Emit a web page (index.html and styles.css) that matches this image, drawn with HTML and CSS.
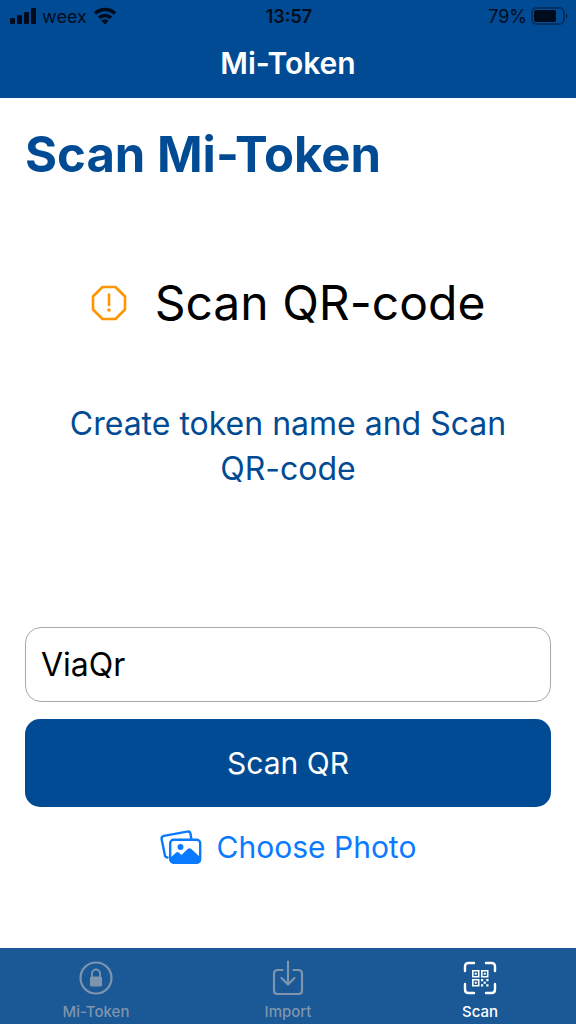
FILE: index.html
```html
<!DOCTYPE html>
<html lang="en">
<head>
    <meta charset="UTF-8">
    <meta name="viewport" content="width=device-width, initial-scale=1.0">
    <title>Mi-Token</title>
    <link rel="stylesheet" href="styles.css">
</head>
<body>
    <header class="header">
        <div class="status-bar">
            <div class="status-left">
                <svg width="26" height="16" viewBox="0 0 26 16" aria-hidden="true">
                    <rect x="0" y="10" width="5" height="6" rx="1"/>
                    <rect x="7" y="7" width="5" height="9" rx="1"/>
                    <rect x="14" y="4" width="5" height="12" rx="1"/>
                    <rect x="21" y="0" width="5" height="16" rx="1"/>
                </svg>
                <span>weex</span>
                <svg width="24" height="18" viewBox="0 0 24 18" aria-hidden="true">
                    <path d="M2 6.5a14.5 14.5 0 0 1 20 0M6 10.800a8.800 8.800 0 0 1 12 0" fill="none" stroke="currentColor" stroke-width="3.400"/>
                    <path d="M12 17.500l-3.600-3.700a5.200 5.200 0 0 1 7.200 0z"/>
                </svg>
            </div>
            <span class="clock">13:57</span>
            <div class="status-right">
                <span>79%</span>
                <svg width="37" height="18" viewBox="0 0 37 18" aria-hidden="true">
                    <rect x="1" y="1" width="32" height="16" rx="4" fill="none" stroke="currentColor" stroke-opacity=".5" stroke-width="1.500"/>
                    <rect x="3" y="3" width="22" height="12" rx="2"/>
                    <path d="M35 6.500c2 1 2 4 0 5z" opacity=".6"/>
                </svg>
            </div>
        </div>
        <div class="nav-title">Mi-Token</div>
    </header>

    <main class="content">
        <h1>Scan Mi-Token</h1>

        <div class="step">
            <svg width="36" height="36" viewBox="0 0 36 36" fill="none" stroke="currentColor" aria-hidden="true">
                <path d="M11.500 2h13L34 11.500v13L24.500 34h-13L2 24.500v-13z" stroke-width="2.600" stroke-linejoin="round"/>
                <path d="M18 9.500v10.500" stroke-width="2.600" stroke-linecap="round"/>
                <circle cx="18" cy="25" r="1.800" fill="currentColor" stroke="none"/>
            </svg>
            <h2>Scan QR-code</h2>
        </div>

        <p class="hint">Create token name and Scan QR-code</p>

        <form class="form">
            <input class="name-input" type="text" value="ViaQr" aria-label="Token name">
            <button class="scan-btn" type="button">Scan QR</button>
            <button class="photo-btn" type="button">
                <svg width="42" height="34" viewBox="0 0 42 34" fill="none" stroke="currentColor" stroke-width="2.400" aria-hidden="true">
                    <path d="M7.500 27.500c-1.500 0-2.300-.8-2.600-2.200L1.700 9.500c-.4-2 .4-3.200 2.200-3.600L27 1.600c1.900-.4 3.100.4 3.500 2.200L31.300 9" stroke-linecap="round"/>
                    <rect x="10.200" y="9.700" width="30" height="23" rx="3.500"/>
                    <circle cx="20.500" cy="17" r="3" fill="currentColor" stroke="none"/>
                    <path d="M10 28l6.200-5.400c.9-.8 1.700-.8 2.600 0l2.600 2.400 6.600-6.200c1-.9 2-.9 3 0l9.500 8.800v3c0 2-1 3-3 3h-24c-2 0-3.500-1-3.500-3z" fill="currentColor" stroke="none"/>
                </svg>
                <span>Choose Photo</span>
            </button>
        </form>
    </main>

    <nav class="tab-bar">
        <a class="tab" href="#token">
            <svg width="36" height="36" viewBox="0 0 36 36" fill="none" stroke="currentColor" aria-hidden="true">
                <circle cx="18" cy="18" r="15.500" stroke-width="2.200"/>
                <rect x="12" y="16.500" width="12" height="10" rx="1.500" fill="currentColor" stroke="none"/>
                <path d="M14 17v-3.500a4 4 0 0 1 8 0V17" stroke-width="1.800"/>
            </svg>
            <span>Mi-Token</span>
        </a>
        <a class="tab" href="#import">
            <svg width="36" height="36" viewBox="0 0 36 36" fill="none" stroke="currentColor" stroke-width="2.200" stroke-linecap="round" stroke-linejoin="round" aria-hidden="true">
                <path d="M12.500 10H7.500c-2.500 0-3.500 1-3.500 3.500v17C4 33 5 34 7.500 34h21c2.500 0 3.500-1 3.500-3.500v-17c0-2.500-1-3.500-3.500-3.500h-5"/>
                <path d="M18 1.500v22.500M11.500 18l6.500 6.500 6.500-6.500"/>
            </svg>
            <span>Import</span>
        </a>
        <a class="tab active" href="#scan">
            <svg width="36" height="36" viewBox="0 0 36 36" fill="none" stroke="currentColor" aria-hidden="true">
                <path d="M3 11V6.500C3 4 4 3 6.500 3H12M24 3h5.500C32 3 33 4 33 6.500V11M33 24v5.500c0 2.500-1 3.500-3.500 3.500H24M12 33H6.500C4 33 3 32 3 29.500V24" stroke-width="2.400" stroke-linecap="round"/>
                <path d="M10.800 10.800h5.900v5.900h-5.900zM19.800 10.800h5.900v5.900h-5.900zM10.800 19.800h5.900v5.900h-5.900z" stroke-width="1.600"/>
                <path d="M12.750 12.750h2v2h-2zM21.750 12.750h2v2h-2zM12.750 21.750h2v2h-2zM19 19h2.200v2.200h-2.200zM24.300 19h2.200v2.200h-2.200zM21.650 21.650h2.200v2.200h-2.200zM19 24.300h2.200v2.200h-2.200zM24.300 24.300h2.200v2.200h-2.200z" fill="currentColor" stroke="none"/>
            </svg>
            <span>Scan</span>
        </a>
    </nav>
</body>
</html>
```

FILE: styles.css
```css
* {
    box-sizing: border-box;
}
body {
    display: flex;
    flex-direction: column;
    min-height: 100vh;
    margin: 0;
    background: #fff;
    color: #000;
    font-family: Inter, "Liberation Sans", sans-serif;
}
h1, h2, p {
    margin: 0;
    font-weight: 400;
}

/* Header */
.header {
    height: 98px;
    background: #004b93;
}
.status-bar {
    display: grid;
    grid-template-columns: 1fr auto 1fr;
    align-items: center;
    height: 32px;
    padding: 0 8px 0 10px;
    color: #020b1c;
    font-size: 18px;
}
.status-bar svg {
    fill: currentColor;
}
.status-left, .status-right {
    display: flex;
    align-items: center;
    gap: 6px;
}
.status-right {
    justify-content: flex-end;
    gap: 4px;
}
.clock {
    font-weight: 600;
}
.nav-title {
    color: #fff;
    font-size: 30px;
    font-weight: 600;
    line-height: 62px;
    text-align: center;
}

/* Content */
.content {
    flex: 1;
    padding: 24px 25px;
}
h1 {
    color: #004b93;
    font-size: 49px;
    font-weight: 700;
    line-height: 66px;
}
.step {
    display: flex;
    align-items: center;
    justify-content: center;
    gap: 28px;
    margin-top: 83px;
    color: #ff9500;
}
h2 {
    color: #000;
    font-size: 48px;
    line-height: 64px;
}
.hint {
    margin-top: 66px;
    padding: 0 40px;
    color: #004b93;
    font-size: 32px;
    line-height: 45px;
    text-align: center;
}

/* Form */
.form {
    display: flex;
    flex-direction: column;
    margin-top: 136px;
}
.name-input, .scan-btn, .photo-btn {
    font-family: inherit;
    font-size: 30px;
}
.name-input {
    width: 100%;
    height: 75px;
    padding: 0 15px;
    border: 1px solid #a8a8a8;
    border-radius: 16px;
    background: #fff;
    color: #000;
    font-size: 32px;
}
.scan-btn {
    height: 88px;
    margin-top: 17px;
    border: 0;
    border-radius: 15px;
    background: #004b93;
    color: #fff;
}
.photo-btn {
    display: flex;
    align-items: center;
    align-self: center;
    gap: 15px;
    height: 44px;
    margin-top: 18px;
    padding: 0;
    border: 0;
    background: none;
    color: #0a7aff;
}

/* Tab bar */
.tab-bar {
    display: flex;
    height: 76px;
    background: #1a5896;
}
.tab {
    display: flex;
    flex: 1;
    flex-direction: column;
    align-items: center;
    gap: 6px;
    padding-top: 12px;
    color: #7f95ae;
    font-size: 15px;
    font-weight: 500;
    line-height: 20px;
    text-decoration: none;
}
.tab.active {
    color: #fff;
}
```
